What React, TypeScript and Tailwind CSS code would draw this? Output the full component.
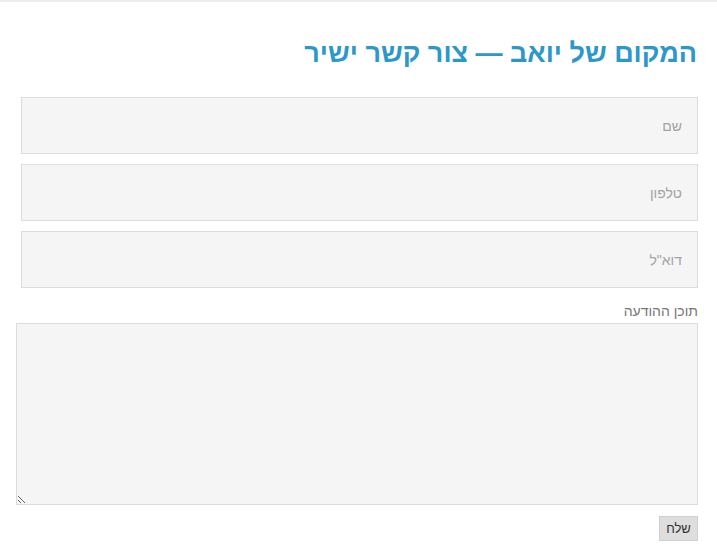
import React from "react";

export default function App() {
  const font = { fontFamily: '"Liberation Sans", Arial, sans-serif' };
  return (
    <div dir="rtl" className="w-[717px] h-[553px] bg-white relative overflow-hidden" style={font}>
      <div className="h-[2px] bg-[#ededed]" />
      <div className="pr-[19px] pl-[16px]">
        <h1 className="text-[27px] font-bold text-[#2e97c9] leading-none pt-[38px] h-[95px] pr-[1px]">
          המקום של יואב — צור קשר ישיר
        </h1>
        <div className="flex flex-col gap-[10px] pl-[5px]">
          {["שם", "טלפון", "דוא\"ל"].map((p) => (
            <input
              key={p}
              placeholder={p}
              className="h-[57px] w-full bg-[#f5f5f5] border border-[#dcdcdc] px-[15px] text-[14px] text-[#555] placeholder:text-[#a3a3a3] outline-none"
            />
          ))}
        </div>
        <div className="text-[14px] text-[#777] mt-[14px] h-[21px] leading-[18px]">תוכן ההודעה</div>
        <textarea className="block w-full h-[182px] bg-[#f5f5f5] border border-[#dcdcdc] outline-none" />
        <div className="flex mt-[11px]">
          <button className="h-[25px] w-[39px] bg-[#dedede] border border-[#cfcfcf] text-[13px] text-[#333]">
            שלח
          </button>
        </div>
      </div>
    </div>
  );
}
